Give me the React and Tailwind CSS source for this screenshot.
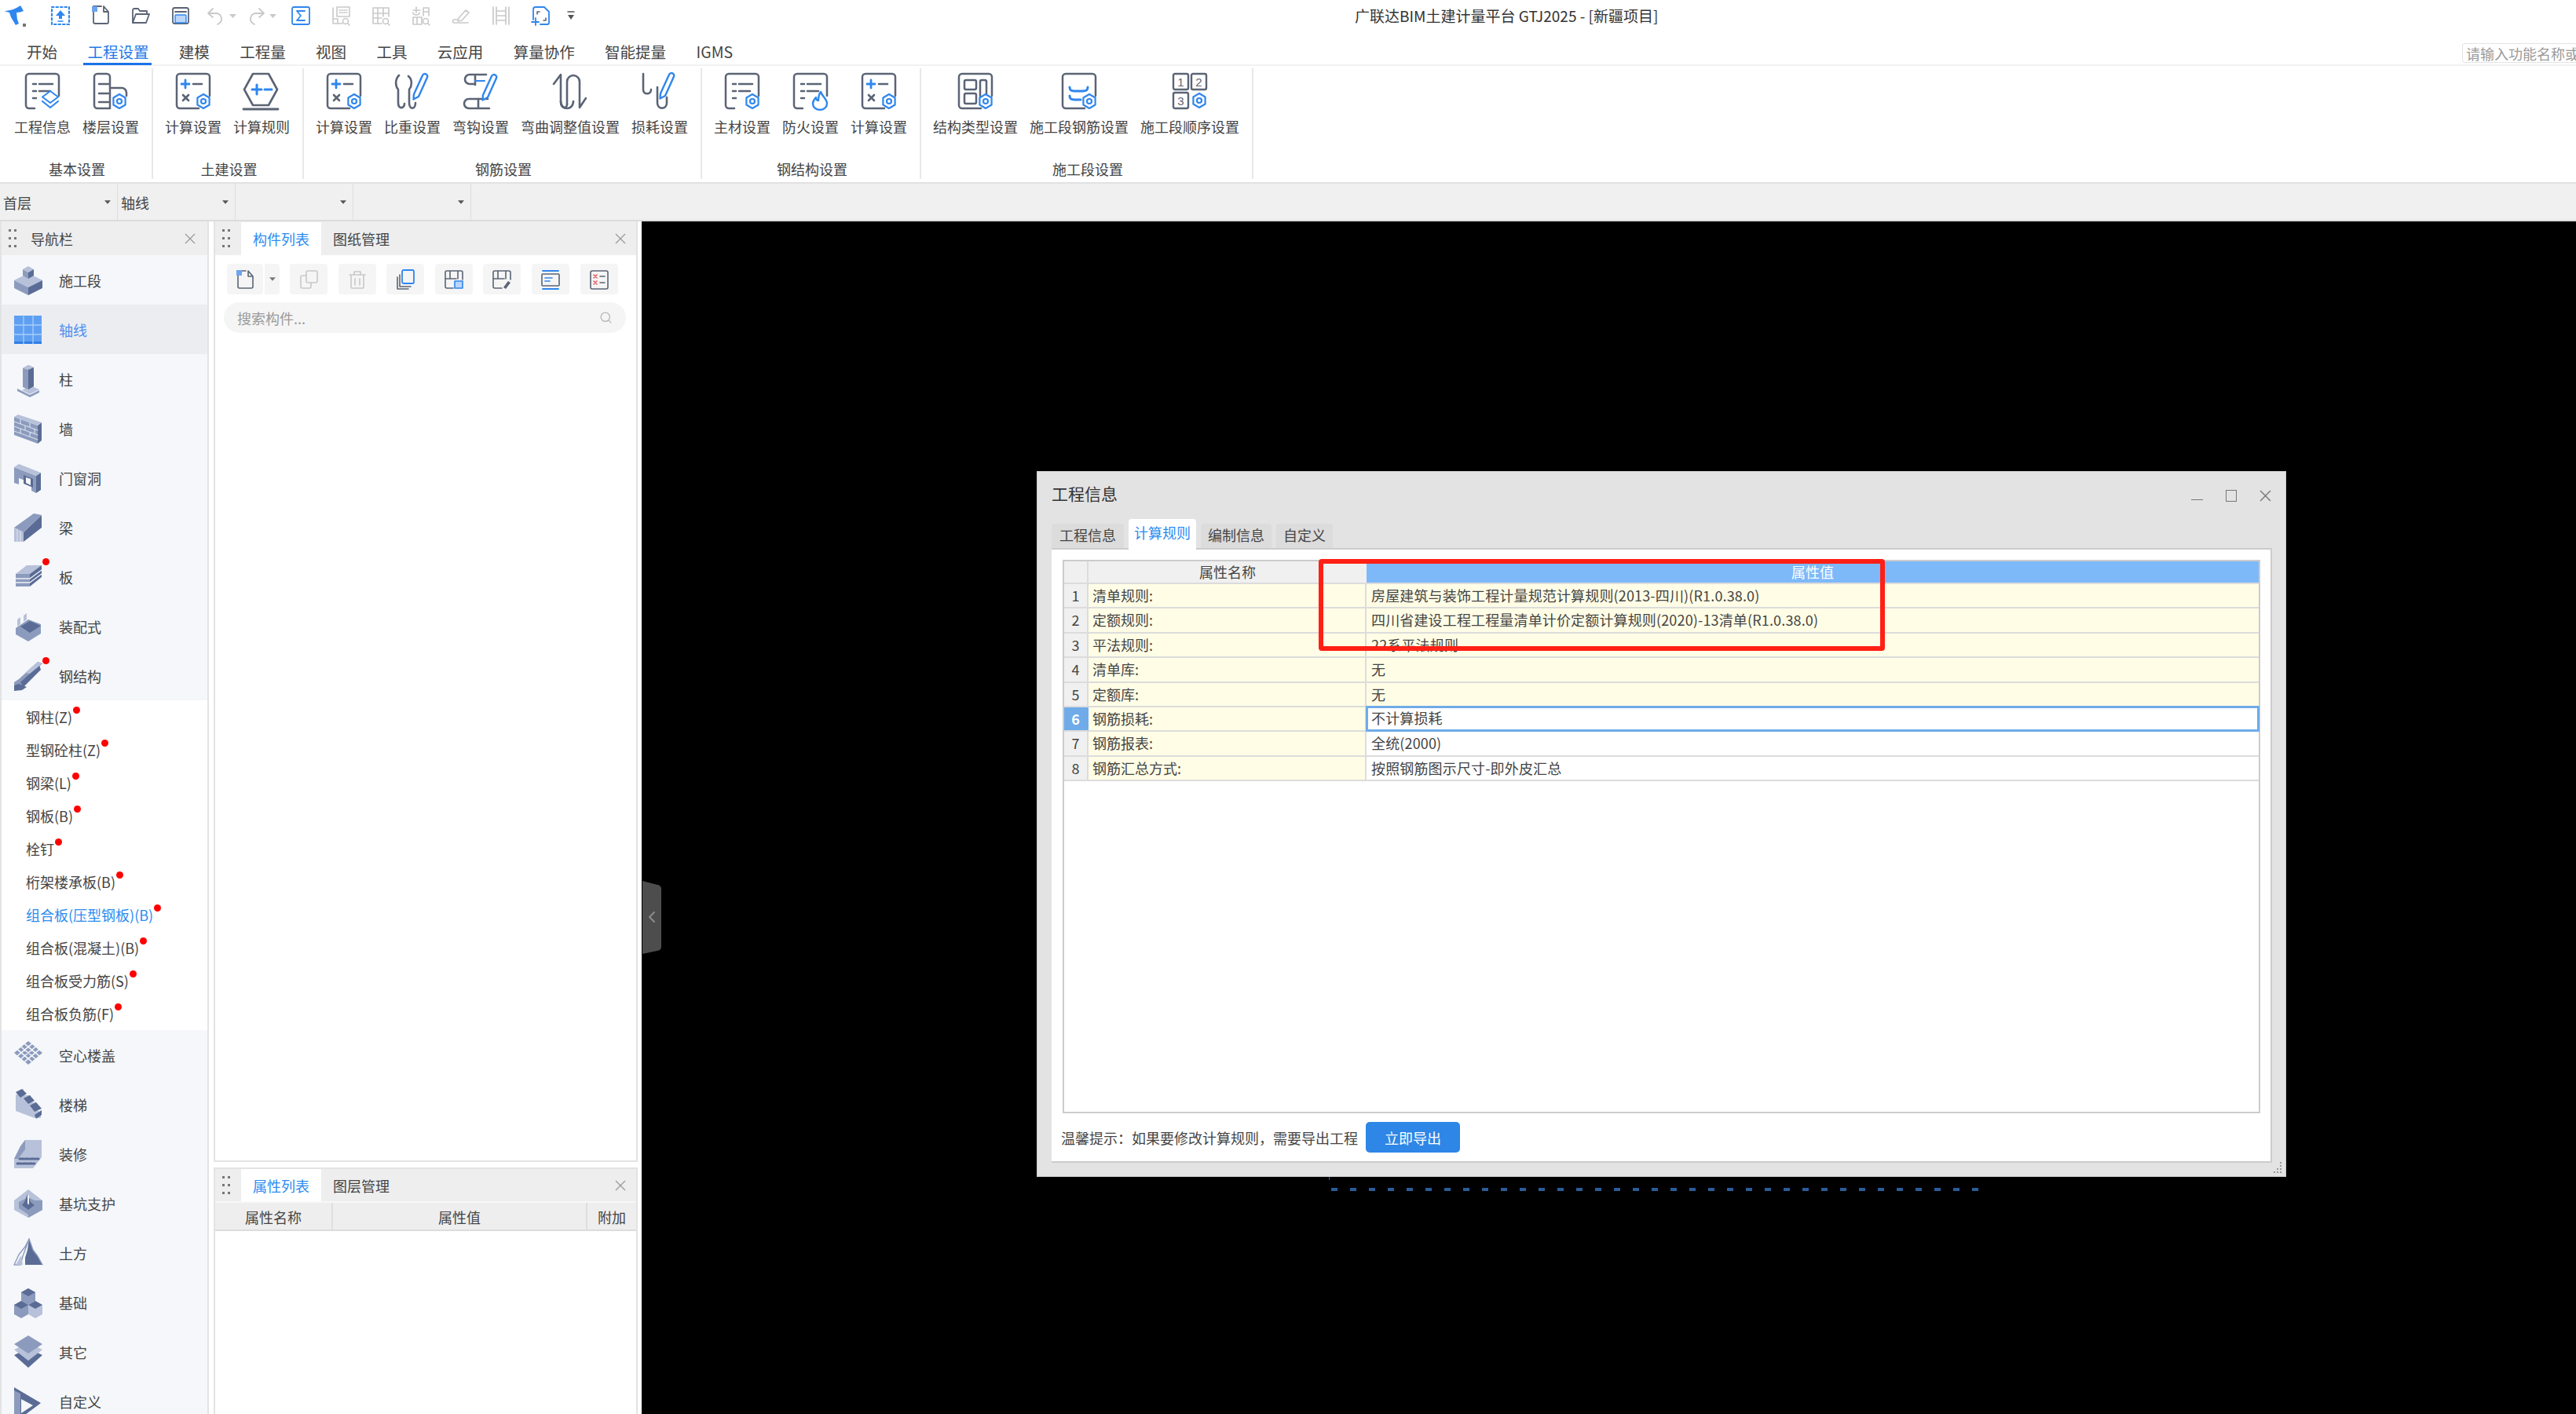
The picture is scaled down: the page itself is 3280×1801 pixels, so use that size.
import React from "react";
import { Search } from "lucide-react";

const G = "#5b6475";
const B = "#2f86ee";
const LG = "#c9c9c9";
const L = "#b7c1d9";
const M = "#8c9bbd";
const D = "#5a6c95";

const Svg = ({ w = 46, h = 46, vb, children, className = "" }) => (
  <svg width={w} height={h} viewBox={vb || `0 0 ${w} ${h}`} fill="none" strokeLinecap="round" strokeLinejoin="round" className={"block overflow-visible " + className}>
    {children}
  </svg>
);

const Caret = ({ color = "#666", w = 9, h = 5 }) => (
  <svg width={w} height={h} viewBox="0 0 9 5" className="block"><path d="M0 0h9L4.5 5z" fill={color} /></svg>
);

const Thin = ({ s = 14, c = "#9a9a9a" }) => (
  <svg width={s} height={s} viewBox="0 0 14 14" className="block"><path d="M1 1l12 12M13 1L1 13" stroke={c} strokeWidth="1.3" /></svg>
);

const Grip = ({ c = "#777" }) => (
  <svg width="10" height="24" viewBox="0 0 10 24" className="block">
    {[1, 11, 21].map((y) => (
      <g key={y} fill={c}><rect x="0" y={y - 1} width="3" height="3" /><rect x="7" y={y - 1} width="3" height="3" /></g>
    ))}
  </svg>
);

/* ---------- ribbon icons ---------- */
const Gear = ({ x, y }) => (
  <g stroke={B} strokeWidth="2.2" fill="#fff">
    <path d={`M${x} ${y - 9}l7.6 4.5v9L${x} ${y + 9}l-7.6-4.5v-9z`} />
    <circle cx={x} cy={y} r="3" />
  </g>
);
const Sheet = () => <path d="M13 45H6a4 4 0 0 1-4-4V5a4 4 0 0 1 4-4h34a4 4 0 0 1 4 4v24" stroke={G} strokeWidth="2.5" />;
const Sheet2 = () => <path d="M30 45H6a4 4 0 0 1-4-4V5a4 4 0 0 1 4-4h34a4 4 0 0 1 4 4v24" stroke={G} strokeWidth="2.5" />;
const Pen = ({ dx = 0, dy = 0 }) => (
  <path transform={`translate(${dx} ${dy})`} d="M24 30L35 6a3.2 3.2 0 0 1 6 2.6L30 33l-6.5 3.5z" stroke={B} strokeWidth="2.4" fill="#fff" />
);
const Lines = ({ last = true }) => (
  <path d={`M11 14h4M19 14h17M11 23h4M19 23h14${last ? "M11 32h4" : ""}`} stroke={G} strokeWidth="2.6" />
);
const CalcIcon = () => (
  <Svg>
    <Sheet2 />
    <path d="M8 14h10M13 9v10" stroke={B} strokeWidth="2.8" />
    <path d="M23 14h11" stroke={G} strokeWidth="2.6" />
    <path d="M10 28l7 7M17 28l-7 7" stroke={G} strokeWidth="2.6" />
    <Gear x={36} y={36} />
  </Svg>
);
const ribbonIcons = {
  info: (
    <Svg>
      <Sheet />
      <Lines />
      <path d="M33 23l10 7.5-10 7.5-10-7.5z" stroke={B} strokeWidth="2" fill="#fff" />
      <path d="M23 36l10 8 10-8" stroke={B} strokeWidth="2.2" />
    </Svg>
  ),
  floor: (
    <Svg>
      <path d="M22 45H6a4 4 0 0 1-4-4V5a4 4 0 0 1 4-4h12a4 4 0 0 1 4 4z" stroke={G} strokeWidth="2.5" />
      <path d="M8 14h12M8 26h12M8 37h12M24 19h13a6 6 0 0 1 6 6v4" stroke={G} strokeWidth="2.5" />
      <Gear x={34} y={36} />
    </Svg>
  ),
  calc: <CalcIcon />,
  rule: (
    <Svg>
      <path d="M12 1h20l11 20-11 20H12L1 21z" stroke={G} strokeWidth="2.6" />
      <path d="M11 21h12M17 15v12M27 21h9" stroke={B} strokeWidth="3" />
      <path d="M0 46h44" stroke={G} strokeWidth="2.8" />
    </Svg>
  ),
  ratio: (
    <Svg>
      <path d="M6 3C1 8 1 16 5 21v17c0 8 8 8 8 1M18 4c5 4 5 12 1 17v17c0 9 8 9 8 0" stroke={G} strokeWidth="2.6" />
      <Pen dx={1} dy={-3} />
    </Svg>
  ),
  hook: (
    <Svg>
      <path d="M30 2H9a6 6 0 0 0 0 12h6M34 45H8a6 6 0 0 1 0-12h24" stroke={G} strokeWidth="2.6" />
      <path d="M16 4v11" stroke={G} strokeWidth="2.6" />
      <path d="M20 33v11" stroke={G} strokeWidth="2.6" />
      <path d="M16 10h12" stroke={B} strokeWidth="2" />
      <Pen dx={2} dy={-2} />
    </Svg>
  ),
  bend: (
    <Svg>
      <path d="M2 14L11 2v34M19 40V11a8 8 0 0 1 16 0v33l8-12M11 36c0 12 16 12 16 0" stroke={G} strokeWidth="2.6" />
      <path d="M11 36c0 10 8 10 8 4" stroke={G} strokeWidth="2.6" />
    </Svg>
  ),
  loss: (
    <Svg>
      <path d="M2 1v20c0 7 10 7 10 0M20 18v20c0 9 12 9 12 0v-7" stroke={G} strokeWidth="2.6" />
      <Pen dx={0} dy={-4} />
    </Svg>
  ),
  main: (
    <Svg>
      <Sheet />
      <Lines />
      <Gear x={36} y={36} />
    </Svg>
  ),
  fire: (
    <Svg>
      <Sheet />
      <Lines />
      <path d="M36 24c2 6 8 9 8 15a8 7 0 0 1-18 0c0-4 2-6 4-8 0 3 1 4 3 4 0-4 0-7 3-11z" stroke={B} strokeWidth="2.4" fill="#fff" />
    </Svg>
  ),
  struct: (
    <Svg>
      <Sheet2 />
      <rect x="9" y="9" width="15" height="12" rx="2" stroke={G} strokeWidth="2.5" />
      <rect x="29" y="9" width="8" height="22" rx="2" stroke={G} strokeWidth="2.5" />
      <rect x="9" y="26" width="15" height="13" rx="2" stroke={G} strokeWidth="2.5" />
      <Gear x={36} y={36} />
    </Svg>
  ),
  seg: (
    <Svg>
      <Sheet2 />
      <path d="M11 18c0 4 2 5 6 5h11c4 0 6-1 6-5" stroke={B} strokeWidth="3" />
      <path d="M11 29c0 4 2 5 6 5h8" stroke={B} strokeWidth="3" />
      <Gear x={36} y={36} />
    </Svg>
  ),
  order: (
    <Svg>
      <rect x="2" y="1" width="19" height="20" rx="2" stroke={G} strokeWidth="2.4" />
      <rect x="25" y="1" width="19" height="20" rx="2" stroke={G} strokeWidth="2.4" />
      <rect x="2" y="25" width="19" height="20" rx="2" stroke={G} strokeWidth="2.4" />
      <text x="11.5" y="17" textAnchor="middle" fontSize="15" fill={G} fontFamily="Liberation Sans">1</text>
      <text x="34.5" y="17" textAnchor="middle" fontSize="15" fill={G} fontFamily="Liberation Sans">2</text>
      <text x="11.5" y="41" textAnchor="middle" fontSize="15" fill={G} fontFamily="Liberation Sans">3</text>
      <Gear x={35} y={35} />
    </Svg>
  ),
};

const ribbon = [
  { label: "基本设置", w: "w-[195px]", pl: "pl-[18px]", items: [["工程信息", "info"], ["楼层设置", "floor"]] },
  { label: "土建设置", w: "w-[192px]", pl: "pl-[15px]", items: [["计算设置", "calc"], ["计算规则", "rule"]] },
  { label: "钢筋设置", w: "w-[507px]", pl: "pl-[15px]", items: [["计算设置", "calc"], ["比重设置", "ratio"], ["弯钩设置", "hook"], ["弯曲调整值设置", "bend"], ["损耗设置", "loss"]] },
  { label: "钢结构设置", w: "w-[279px]", pl: "pl-[15px]", items: [["主材设置", "main"], ["防火设置", "fire"], ["计算设置", "calc"]] },
  { label: "施工段设置", w: "w-[423px]", pl: "pl-[15px]", items: [["结构类型设置", "struct"], ["施工段钢筋设置", "seg"], ["施工段顺序设置", "order"]] },
];

/* ---------- quick access icons ---------- */
const Q = ({ children, w = "w-[51px]" }) => <div className={w + " flex justify-center"}>{children}</div>;
const qa = (
  <>
    <Q>
      <Svg w={24} h={24}>
        <rect x="1" y="1" width="22" height="22" stroke={B} strokeWidth="2.2" strokeDasharray="2.5 3" />
        <path d="M12 5l6 7h-4v4h-4v-4H6z" fill={B} />
        <path d="M9 19h6" stroke={B} strokeWidth="1.5" />
      </Svg>
    </Q>
    <Q>
      <Svg w={24} h={24}>
        <path d="M13 1H3v20a2 2 0 0 0 2 2h15a2 2 0 0 0 2-2V8l-6-7v7h6" stroke={G} strokeWidth="1.8" transform="translate(0 -1)" />
        <rect x="1" y="0" width="7" height="7" fill="#6ea4ee" />
      </Svg>
    </Q>
    <Q>
      <Svg w={24} h={24}>
        <path d="M2 21V5a2 2 0 0 1 2-2h5l2 3h9v3" stroke={G} strokeWidth="1.8" />
        <path d="M2 21L6 10h17l-4 11z" stroke={G} strokeWidth="1.8" />
      </Svg>
    </Q>
    <Q>
      <Svg w={24} h={24}>
        <rect x="2" y="2" width="20" height="20" rx="2.5" stroke={G} strokeWidth="1.8" />
        <path d="M5 7h14" stroke={G} strokeWidth="2" />
        <rect x="5" y="11" width="14" height="10" rx="1" fill="#bcd6f8" stroke={B} strokeWidth="1.4" />
      </Svg>
    </Q>
    <div className="w-[51px] flex items-center gap-[5px] pl-[8px]">
      <Svg w={24} h={24}><path d="M8 3L2 9l6 5M2 9h10a7 7 0 0 1 5 12l-3 2" stroke={LG} strokeWidth="1.8" /></Svg>
      <Caret color={LG} />
    </div>
    <div className="w-[51px] flex items-center gap-[5px] pl-[8px]">
      <Svg w={24} h={24}><path d="M16 3l6 6-6 5M22 9H12a7 7 0 0 0-5 12l3 2" stroke={LG} strokeWidth="1.8" /></Svg>
      <Caret color={LG} />
    </div>
    <Q>
      <Svg w={24} h={24}>
        <rect x="1" y="1" width="22" height="22" rx="2" stroke={B} strokeWidth="1.8" />
        <path d="M17 6H7l5 6-5 6h10" stroke={B} strokeWidth="1.8" />
      </Svg>
    </Q>
    <Q>
      <Svg w={24} h={24}>
        <path d="M2 2v20M2 22h12M2 16h6v6" stroke={LG} strokeWidth="1.6" />
        <rect x="7" y="1" width="16" height="12" stroke={LG} strokeWidth="1.6" />
        <path d="M10 5h10M10 8h10" stroke={LG} strokeWidth="1.6" strokeDasharray="1.5 1.5" />
        <circle cx="18" cy="19" r="3.5" stroke={LG} strokeWidth="1.6" />
        <path d="M21 22l2 2" stroke={LG} strokeWidth="1.6" />
      </Svg>
    </Q>
    <Q>
      <Svg w={24} h={24}>
        <path d="M2 2h20v11M2 2v20h11M2 9h20M2 15h11M8 2v20M15 2v11" stroke={LG} strokeWidth="1.6" />
        <circle cx="18" cy="19" r="3.5" stroke={LG} strokeWidth="1.6" />
        <path d="M21 22l2 2" stroke={LG} strokeWidth="1.6" />
      </Svg>
    </Q>
    <Q>
      <Svg w={24} h={24}>
        <path d="M2 5h9M6 1v7M2 8c0 3 2 3 4 3s4 0 4-3M15 12V2h7v10M15 7h7M2 14h11v9H2zM7 14v9" stroke={LG} strokeWidth="1.6" />
        <circle cx="18" cy="19" r="3.5" stroke={LG} strokeWidth="1.6" />
        <path d="M21 22l2 2" stroke={LG} strokeWidth="1.6" />
      </Svg>
    </Q>
    <Q>
      <Svg w={24} h={24}>
        <path d="M9 15L18 5l4 3-9 10-5 1zM7 17H3c-2 0-2 4 0 4h18" stroke={LG} strokeWidth="1.6" />
      </Svg>
    </Q>
    <Q>
      <Svg w={24} h={24}>
        <path d="M2 1v22M6 1v22M18 1v22M22 1v22M6 6h12M6 12h12M6 18h12" stroke={LG} strokeWidth="1.7" />
      </Svg>
    </Q>
    <Q>
      <Svg w={24} h={24}>
        <path d="M2 17V4a3 3 0 0 1 3-3h11l6 6v14a2 2 0 0 1-2 2h-9" stroke={B} strokeWidth="1.8" />
        <path d="M7 10V7h3M18 15v3h-3" stroke={G} strokeWidth="1.6" />
        <path d="M0 20h9M5 15v9" stroke={B} strokeWidth="1.8" />
      </Svg>
    </Q>
    <Q w="w-[26px]">
      <Svg w={10} h={14}>
        <path d="M1 2h8" stroke="#555" strokeWidth="1.5" />
        <path d="M1 6h8l-4 6z" fill="#555" />
      </Svg>
    </Q>
  </>
);

/* ---------- nav icons ---------- */
const P = ({ d, f }) => <polygon points={d} fill={f} />;
const navIcons = {
  seg: (
    <Svg w={36} h={36}>
      <P d="18,9 36,18 18,27 0,18" f={L} /><P d="0,18 18,27 18,37 0,28" f={M} /><P d="36,18 18,27 18,37 36,28" f={D} />
      <P d="18,0 25,4 18,8 11,4" f={L} /><P d="11,4 18,8 18,16 11,12" f={M} /><P d="25,4 18,8 18,16 25,12" f={D} />
    </Svg>
  ),
  axis: (
    <Svg w={36} h={36}>
      <rect x="0" y="0" width="35" height="36" fill="#5e9ff2" />
      <rect x="0" y="33" width="35" height="3" fill="#2f7fe6" />
      <path d="M12 0v36M24 0v36M0 12h35M0 24h35" stroke="#a9cdf9" strokeWidth="1.3" />
    </Svg>
  ),
  col: (
    <Svg w={36} h={36}>
      <P d="10,32 20,37 32,31 20,26" f={L} /><P d="4,33 20,41 32,35 32,32 20,38 4,30" f={M} />
      <P d="11,4 18,0 25,3 25,27 18,31 11,28" f={M} /><P d="18,5 25,3 25,27 18,31" f={D} /><P d="11,4 18,0 25,3 18,6" f={L} />
    </Svg>
  ),
  wall: (
    <Svg w={36} h={36}>
      <P d="0,3 30,14 30,37 0,26" f={M} /><P d="30,14 35,10 35,33 30,37" f={D} /><P d="0,3 5,0 35,10 30,14" f={L} />
      <path d="M0 9l30 11M0 15l30 11M0 21l30 11M8 6v6M20 10v6M14 14v6M26 18v6M8 18v6M20 22v6" stroke="#d5dbe9" strokeWidth="1.2" />
    </Svg>
  ),
  door: (
    <Svg w={36} h={36}>
      <P d="0,4 28,15 28,37 22,34 22,24 6,18 6,26 0,24" f={M} /><P d="28,15 34,11 34,33 28,37" f={D} /><P d="0,4 6,0 34,11 28,15" f={L} />
      <P d="12,14 24,19 24,30 12,25" f={D} /><P d="15,17 21,19 21,27 15,24" f="#f5f7fa" />
    </Svg>
  ),
  beam: (
    <Svg w={36} h={36}>
      <P d="0,18 12,24 12,36 0,36" f={L} /><P d="12,24 35,2 35,18 12,36" f={D} /><P d="0,18 25,0 35,2 12,24" f={M} />
      <path d="M4 20v16M8 22v14" stroke="#e2e6f0" strokeWidth="1" />
    </Svg>
  ),
  slab: (
    <Svg w={36} h={36}>
      <P d="2,14 20,14 35,3 16,3" f={L} /><P d="2,14 20,14 20,30 2,30" f={M} /><P d="20,14 35,3 35,18 20,30" f={D} />
      <path d="M2 20h18l15-11M2 25h18l15-11" stroke="#eef1f6" strokeWidth="1.4" />
    </Svg>
  ),
  pre: (
    <Svg w={36} h={36}>
      <P d="2,20 18,9 34,15 34,27 18,37 2,28" f={M} /><P d="8,18 20,11 34,17 20,26" f={D} />
      <P d="4,9 8,6 8,15 4,18" f={L} /><P d="12,4 16,1 16,9 12,12" f={L} />
    </Svg>
  ),
  steel: (
    <Svg w={36} h={36}>
      <P d="0,26 6,22 30,0 36,2 32,6 10,26 12,34 4,36 0,36" f={M} />
      <P d="8,26 32,4 34,10 12,32" f={D} />
      <P d="0,30 6,28 16,32 10,36 0,37" f={D} />
      <P d="14,14 30,0 36,2 20,15" f={L} />
    </Svg>
  ),
  hollow: (
    <Svg w={36} h={36}>
      <P d="18,0 36,15 18,30 0,15" f={M} />
      <path d="M9 7.500l18 15M13.500 3.700l18 15M4.500 11.200l18 15M27 7.500l-18 15M22.500 3.700l-18 15M31.500 11.200l-18 15" stroke="#f5f7fa" strokeWidth="1.6" />
    </Svg>
  ),
  stair: (
    <Svg w={36} h={40}>
      <P d="2,8 12,0 12,8 20,8 20,17 28,17 28,26 34,30 34,37 26,37 2,28" f={L} />
      <P d="2,4 10,0 16,6 8,11" f={D} /><P d="12,12 20,8 26,15 18,19" f={D} /><P d="20,21 28,17 35,25 26,29" f={D} /><P d="26,33 35,27 35,33 28,38" f={D} />
    </Svg>
  ),
  deco: (
    <Svg w={36} h={36}>
      <P d="8,8 14,0 35,0 35,22 24,36 0,36 0,24" f={L} /><P d="0,24 8,8 14,0 14,12 5,24" f={M} />
      <path d="M7 24h24M4 30h22" stroke={D} strokeWidth="3" strokeDasharray="5 2" />
    </Svg>
  ),
  pit: (
    <Svg w={36} h={36}>
      <P d="18,0 36,14 36,26 18,36 0,26 0,14" f={L} /><P d="18,14 36,14 36,26 18,36" f={M} /><P d="6,16 18,10 30,16 30,24 18,32 6,24" f={M} />
      <P d="13,16 17,6 21,16 26,20 18,26 10,20" f={D} /><path d="M18 8v10" stroke="#eef1f6" strokeWidth="2" />
    </Svg>
  ),
  earth: (
    <Svg w={36} h={36}>
      <path d="M14 33V24l3-10 2-14 5 14 6 8 6 11z" fill={D} />
      <path d="M19 0l5 14 6 8 6 11" stroke={M} strokeWidth="1.4" />
      <path d="M0 33L6 20l8-10 5-10-5 14-3 8-3 11z" stroke={M} strokeWidth="1.4" />
      <path d="M2 33l7-12 2 12z" fill={L} />
    </Svg>
  ),
  found: (
    <Svg w={36} h={36}>
      <P d="18,0 27,5 27,16 18,21 9,16 9,5" f={M} /><P d="18,0 27,5 18,10 9,5" f={D} />
      <P d="9,16 18,21 18,33 9,38 0,33 0,21" f={M} /><P d="9,16 18,21 9,26 0,21" f={D} />
      <P d="27,16 36,21 36,33 27,38 18,33 18,21" f={L} /><P d="27,16 36,21 27,26 18,21" f={D} />
    </Svg>
  ),
  other: (
    <Svg w={36} h={36}>
      <P d="0,22 18,13 36,22 18,38" f={D} /><P d="0,15 18,6 36,15 18,29" f={L} /><P d="0,8 18,-3 36,8 18,20" f={M} />
    </Svg>
  ),
  custom: (
    <Svg w={36} h={36}>
      <path d="M0 0l34 20L10 38 0 44z" fill={D} /><path d="M9 15v18l15-10z" fill="#f5f7fa" /><path d="M0 4v40l8-6V8z" fill={M} />
    </Svg>
  ),
};

const NavRow = ({ icon, label, active, dot }) => (
  <div className={"relative flex h-[63px] items-center pl-[16px] " + (active ? "bg-[#ecedf1]" : "")}>
    <div className="flex h-[36px] w-[36px] items-center justify-center">{navIcons[icon]}</div>
    <span className={"ml-[21px] text-[18px] " + (active ? "text-[#4f8ff0]" : "text-[#444]")}>{label}</span>
    {dot && <span className="absolute left-[52px] top-[8px] h-[9px] w-[9px] rounded-full bg-[#ff0000]" />}
  </div>
);

const subs = ["钢柱(Z)", "型钢砼柱(Z)", "钢梁(L)", "钢板(B)", "栓钉", "桁架楼承板(B)", "组合板(压型钢板)(B)", "组合板(混凝土)(B)", "组合板受力筋(S)", "组合板负筋(F)"];

const ToolBtn = ({ children, w = "w-[48px]" }) => (
  <div className={w + " flex h-[39px] items-center justify-center rounded-[4px] bg-[#f5f5f5]"}>{children}</div>
);

const rows = [
  ["清单规则:", "房屋建筑与装饰工程计量规范计算规则(2013-四川)(R1.0.38.0)", 1],
  ["定额规则:", "四川省建设工程工程量清单计价定额计算规则(2020)-13清单(R1.0.38.0)", 1],
  ["平法规则:", "22系平法规则", 1],
  ["清单库:", "无", 1],
  ["定额库:", "无", 1],
  ["钢筋损耗:", "不计算损耗", 2],
  ["钢筋报表:", "全统(2000)", 0],
  ["钢筋汇总方式:", "按照钢筋图示尺寸-即外皮汇总", 0],
];

export default function App() {
  return (
    <div className="relative flex h-[1801px] w-[3280px] flex-col overflow-hidden bg-white font-['Noto_Sans_CJK_SC',sans-serif] text-[18px] leading-[24px] text-[#444]">
      {/* title bar */}
      <div className="flex h-[44px] shrink-0 items-center pb-[4px]">
        <div className="relative ml-[5px] h-[28px] w-[46px]">
          <Svg w={26} h={26}>
            <path d="M0 8C6 8 14 6 21 1l4 7c-3 1-6 2-9 2l1 9 2 5-4 2-6-10-2-6z" fill={B} />
            <path d="M24 24h4v4h-4z" fill="#777" />
          </Svg>
        </div>
        {qa}
        <div className="ml-[985px] whitespace-nowrap text-[19px] text-[#333]">广联达BIM土建计量平台 GTJ2025 - [新疆项目]</div>
      </div>

      {/* tabs */}
      <div className="relative flex h-[40px] shrink-0 items-start border-b-[2px] border-[#f2f2f2] pl-[14.8px] pt-[10px] text-[19.5px]">
        {["开始", "工程设置", "建模", "工程量", "视图", "工具", "云应用", "算量协作", "智能提量", "IGMS"].map((t) => (
          <div key={t} className="px-[19.2px]">
            {t === "工程设置" ? (
              <span className="relative block text-[#1f7ae6]">
                {t}
                <span className="absolute -left-[5px] -right-[4px] top-[26px] h-[3px] bg-[#1a73e8]" />
              </span>
            ) : (
              <span className="block">{t}</span>
            )}
          </div>
        ))}
        <div className="absolute -right-[20px] top-[11px] flex h-[25px] w-[165px] items-center overflow-hidden whitespace-nowrap rounded-[3px] border border-[#e3e3e3] pl-[4px] text-[18px] text-[#9a9a9a]">
          请输入功能名称或
        </div>
      </div>

      {/* ribbon */}
      <div className="flex h-[150px] shrink-0 border-b-[2px] border-[#e2e2e2] pt-[3px]">
        {ribbon.map((g) => (
          <div key={g.label} className={g.w + " flex h-[141px] flex-col border-r-[2px] border-[#e8e8e8]"}>
            <div className={g.pl + " flex gap-[15px]"}>
              {g.items.map(([t, ic], i) => (
                <div key={i} className="flex flex-col items-center">
                  <div className="mt-[6px] h-[46px]">{ribbonIcons[ic]}</div>
                  <div className="mt-[10px] whitespace-nowrap">{t}</div>
                </div>
              ))}
            </div>
            <div className="mt-auto pl-[3px] pb-[1px] text-center leading-[23px]">{g.label}</div>
          </div>
        ))}
      </div>

      {/* combobox bar */}
      <div className="flex h-[48px] shrink-0 border-b-[2px] border-[#dcdcdc] bg-[#f0f0f0]">
        {["首层", "轴线", "", ""].map((t, i) => (
          <div key={i} className="flex w-[150px] items-center justify-between border-r border-[#dedede] pl-[4px] pr-[8px]">
            <span className="pt-[1px]">{t}</span>
            <Caret color="#555" w={8} h={5} />
          </div>
        ))}
      </div>

      {/* main */}
      <div className="flex min-h-0 flex-1">
        {/* nav */}
        <div className="w-[266px] shrink-0 overflow-hidden border-x-[2px] border-[#e3e3e3] bg-[#f5f7fa]">
          <div className="flex h-[43px] items-center bg-[#eeeeef] pl-[9px] pr-[15px]">
            <Grip />
            <span className="ml-[18px] flex-1">导航栏</span>
            <Thin />
          </div>
          <NavRow icon="seg" label="施工段" />
          <NavRow icon="axis" label="轴线" active />
          <NavRow icon="col" label="柱" />
          <NavRow icon="wall" label="墙" />
          <NavRow icon="door" label="门窗洞" />
          <NavRow icon="beam" label="梁" />
          <NavRow icon="slab" label="板" dot />
          <NavRow icon="pre" label="装配式" />
          <NavRow icon="steel" label="钢结构" dot />
          <div className="bg-white">
            {subs.map((s, i) => (
              <div key={s} className="flex h-[42px] items-center pl-[31px]">
                <span className={"relative " + (i === 6 ? "text-[#2b8cf0]" : "text-[#444]")}>
                  {s}
                  <span className="absolute -right-[10px] -top-[1.5px] h-[9px] w-[9px] rounded-full bg-[#ff0000]" />
                </span>
              </div>
            ))}
          </div>
          <NavRow icon="hollow" label="空心楼盖" />
          <NavRow icon="stair" label="楼梯" />
          <NavRow icon="deco" label="装修" />
          <NavRow icon="pit" label="基坑支护" />
          <NavRow icon="earth" label="土方" />
          <NavRow icon="found" label="基础" />
          <NavRow icon="other" label="其它" />
          <NavRow icon="custom" label="自定义" />
        </div>

        {/* middle column */}
        <div className="ml-[6px] flex w-[540px] shrink-0 flex-col">
          <div className="flex h-[1198px] flex-col border-x-[2px] border-b-[2px] border-[#e3e3e3]">
            <div className="flex h-[43px] items-end bg-[#eeeeef] pr-[13px]">
              <div className="flex h-full w-[33px] items-center justify-center pr-[6px]"><Grip /></div>
              <div className="flex h-[42px] w-[102px] items-center justify-center bg-white text-[#2b8cf0]">构件列表</div>
              <div className="flex h-[42px] flex-1 items-center pl-[15px]">图纸管理</div>
              <div className="flex h-[42px] items-center"><Thin /></div>
            </div>
            <div className="flex items-center pl-[15px] pt-[11px]">
              <ToolBtn w="w-[46px]">
                <Svg w={24} h={24}>
                  <path d="M13 1H3v20a2 2 0 0 0 2 2h15a2 2 0 0 0 2-2V8l-6-7v7h6" stroke={G} strokeWidth="1.6" />
                  <rect x="1" y="0" width="7" height="7" fill="#6ea4ee" />
                </Svg>
              </ToolBtn>
              <div className="ml-[2px] mr-[13px] flex h-[39px] w-[19px] items-center justify-center rounded-r-[4px] bg-[#f5f5f5]"><Caret color="#777" w={8} h={5} /></div>
              <div className="flex gap-[13.6px]">
                <ToolBtn>
                  <Svg w={24} h={24}><rect x="9" y="1" width="14" height="15" rx="2" stroke={LG} strokeWidth="1.6" /><path d="M9 7H4a2 2 0 0 0-2 2v12a2 2 0 0 0 2 2h9a2 2 0 0 0 2-2v-5" stroke={LG} strokeWidth="1.6" /></Svg>
                </ToolBtn>
                <ToolBtn>
                  <Svg w={24} h={24}><path d="M2 6h20M8 6V2h8v4M4 6v16a1 1 0 0 0 1 1h14a1 1 0 0 0 1-1V6M9 11v8M15 11v8" stroke={LG} strokeWidth="1.6" /></Svg>
                </ToolBtn>
                <ToolBtn>
                  <Svg w={24} h={24}><rect x="8" y="0" width="15" height="17" rx="2" stroke={B} strokeWidth="1.8" /><path d="M5 6v15h14M2 9v15h14" stroke={G} strokeWidth="1.6" /></Svg>
                </ToolBtn>
                <ToolBtn>
                  <Svg w={24} h={24}><path d="M11 23H3a2 2 0 0 1-2-2V3a2 2 0 0 1 2-2h18a2 2 0 0 1 2 2v9M7 1v10M1 11h14M17 1v10" stroke={G} strokeWidth="1.6" /><rect x="13" y="14" width="10" height="9" stroke={B} strokeWidth="1.6" fill="#bcd6f8" /></Svg>
                </ToolBtn>
                <ToolBtn>
                  <Svg w={24} h={24}><path d="M12 23H3a2 2 0 0 1-2-2V3a2 2 0 0 1 2-2h18a2 2 0 0 1 2 2v9M7 1v10M1 11h14M17 1v10" stroke={G} strokeWidth="1.6" /><path d="M14 22l6-8 3 2-6 8z" fill={G} /></Svg>
                </ToolBtn>
                <ToolBtn>
                  <Svg w={24} h={24}><path d="M2 1h20M2 24h20" stroke={B} strokeWidth="1.8" /><rect x="1" y="5" width="22" height="15" rx="1" stroke={G} strokeWidth="1.6" /><path d="M5 10h9M5 14h6" stroke={B} strokeWidth="1.7" /></Svg>
                </ToolBtn>
                <ToolBtn>
                  <Svg w={24} h={24}><rect x="1" y="1" width="22" height="23" rx="2" stroke={G} strokeWidth="1.6" /><path d="M5 6l4 4M9 6l-4 4M5 14l4 4M9 14l-4 4" stroke="#e8555a" strokeWidth="1.6" /><path d="M13 8h6M13 16h6" stroke={G} strokeWidth="1.6" /></Svg>
                </ToolBtn>
              </div>
            </div>
            <div className="ml-[11px] mr-[13px] mt-[10px] flex h-[39px] items-center justify-between rounded-full bg-[#f5f5f5] pl-[17px] pr-[17px] text-[#9a9a9a]">
              <span>搜索构件...</span>
              <Search size={17} color="#b5b5b5" strokeWidth={1.8} />
            </div>
          </div>

          <div className="mt-[7px] flex min-h-0 flex-1 flex-col border-x-[2px] border-t-[2px] border-[#e3e3e3]">
            <div className="flex h-[43px] items-end border-b-[2px] border-[#f8f8f8] bg-[#eeeeef] pr-[13px]">
              <div className="flex h-full w-[33px] items-center justify-center pr-[6px]"><Grip /></div>
              <div className="flex h-[41px] w-[102px] items-center justify-center self-end bg-white text-[#2b8cf0]">属性列表</div>
              <div className="flex h-[41px] flex-1 items-center pl-[15px]">图层管理</div>
              <div className="flex h-[41px] items-center"><Thin /></div>
            </div>
            <div className="flex h-[36px] border-b-[2px] border-[#dcdcdc] bg-[#eeeeee] text-center">
              <div className="w-[150px] border-r-[2px] border-[#dedede] pt-[6px]">属性名称</div>
              <div className="w-[324px] border-r-[2px] border-[#dedede] pt-[6px]">属性值</div>
              <div className="flex-1 pt-[6px]">附加</div>
            </div>
          </div>
        </div>

        {/* canvas */}
        <div className="relative ml-[5px] min-w-0 flex-1 bg-black">
          <div className="absolute left-[1px] top-[840px]">
            <Svg w={24} h={94}>
              <path d="M0 0l19 5a5 5 0 0 1 5 5v74a5 5 0 0 1-5 5L0 93z" fill="#4d4d4d" />
              <path d="M15 40l-6 6 6 6" stroke="#8c8c8c" strokeWidth="2" />
            </Svg>
          </div>

          <div className="absolute left-[875px] top-[1217px] h-[4px] w-[1px] bg-[#2b5d99]" />
          <div className="absolute left-[878px] top-[1231px] h-[4px] w-[826px] bg-[repeating-linear-gradient(90deg,#2b5d99_0,#2b5d99_8px,transparent_8px,transparent_24px)]" />

          {/* dialog */}
          <div className="absolute left-[503px] top-[318px] flex h-[899px] w-[1591px] flex-col border border-[#cfcfcf] bg-[#e3e3e3] pl-[18px] pr-[17px]">
            <div className="flex h-[60px] shrink-0 items-center justify-between">
              <span className="pb-[6px] text-[21px] text-[#333]">工程信息</span>
              <div className="flex items-center gap-[29px] pr-[1px]">
                <div className="mt-[11px] h-[1.5px] w-[15px] bg-[#777]" />
                <div className="h-[15px] w-[14px] border-[1.5px] border-[#777]" />
                <Thin s={15} c="#777" />
              </div>
            </div>

            <div className="flex h-[37px] shrink-0 items-end gap-[6px]">
              <div className="flex h-[31px] w-[92px] items-center justify-center rounded-t-[4px] bg-[#dcdcdc] pb-[3px]">工程信息</div>
              <div className="relative top-[2px] flex h-[39px] w-[86px] items-center justify-center rounded-t-[4px] bg-white pb-[5px] text-[#2b8cf0]">计算规则</div>
              <div className="flex h-[31px] w-[90px] items-center justify-center rounded-t-[4px] bg-[#dcdcdc] pb-[3px]">编制信息</div>
              <div className="flex h-[31px] w-[72px] items-center justify-center rounded-t-[4px] bg-[#dcdcdc] pb-[3px]">自定义</div>
            </div>

            <div className="flex h-[783px] shrink-0 flex-col border-[2px] border-l-0 border-[#cccccc] bg-white pl-[14px] pr-[13px] pt-[13px]">
              <div className="h-[705px] shrink-0 border-[2px] border-[#cccccc]">
                <div className="flex h-[29px] border-b-[2px] border-[#dcdcdc] leading-[27px]">
                  <div className="w-[31px] border-r-[2px] border-[#dcdcdc] bg-[#f0f0f0]" />
                  <div className="w-[354px] bg-[#f0f0f0] text-center">属性名称</div>
                  <div className="flex-1 bg-[#7db9f9] text-center text-white">属性值</div>
                </div>
                {rows.map(([n, v, kind], i) => (
                  <div key={i} className="flex h-[31.4px] border-b-[2px] border-[#dcdcdc] leading-[29px]">
                    <div className={"w-[31px] border-r-[2px] text-center " + (kind === 2 ? "border-[#6fabe9] bg-[#6fabe9] font-bold text-white" : "border-[#dcdcdc] bg-[#f0f0f0]")}>{i + 1}</div>
                    <div className="w-[354px] border-r-[2px] border-[#dcdcdc] bg-[#fffde6] pl-[5px]">{n}</div>
                    <div className={"flex-1 pl-[6px] tracking-[0.15px] " + (kind === 1 ? "bg-[#fffde6]" : kind === 2 ? "-my-px bg-white outline-[3px] -outline-offset-[2px] outline-[#6fabe9] outline" : "bg-white")}>{v}</div>
                  </div>
                ))}
              </div>
              <div className="flex flex-1 items-center gap-[10px]">
                <span className="-ml-[2px] whitespace-nowrap">温馨提示：如果要修改计算规则，需要导出工程</span>
                <div className="flex h-[39px] w-[120px] items-center justify-center rounded-[5px] bg-[#2e86e6] text-white">立即导出</div>
              </div>
            </div>

            <div className="absolute bottom-[4px] right-[4px]">
              <Svg w={12} h={14}>
                <g fill="#999">
                  <rect x="9" y="0" width="2" height="2" /><rect x="9" y="4" width="2" height="2" /><rect x="9" y="8" width="2" height="2" /><rect x="9" y="12" width="2" height="2" />
                  <rect x="5" y="8" width="2" height="2" /><rect x="5" y="12" width="2" height="2" /><rect x="1" y="12" width="2" height="2" />
                </g>
              </Svg>
            </div>

            {/* annotation */}
            <div className="pointer-events-none absolute left-[358px] top-[111px] h-[117px] w-[721px] rounded-[4px] border-[6px] border-[#ff2015]" />
          </div>
        </div>
      </div>
    </div>
  );
}
